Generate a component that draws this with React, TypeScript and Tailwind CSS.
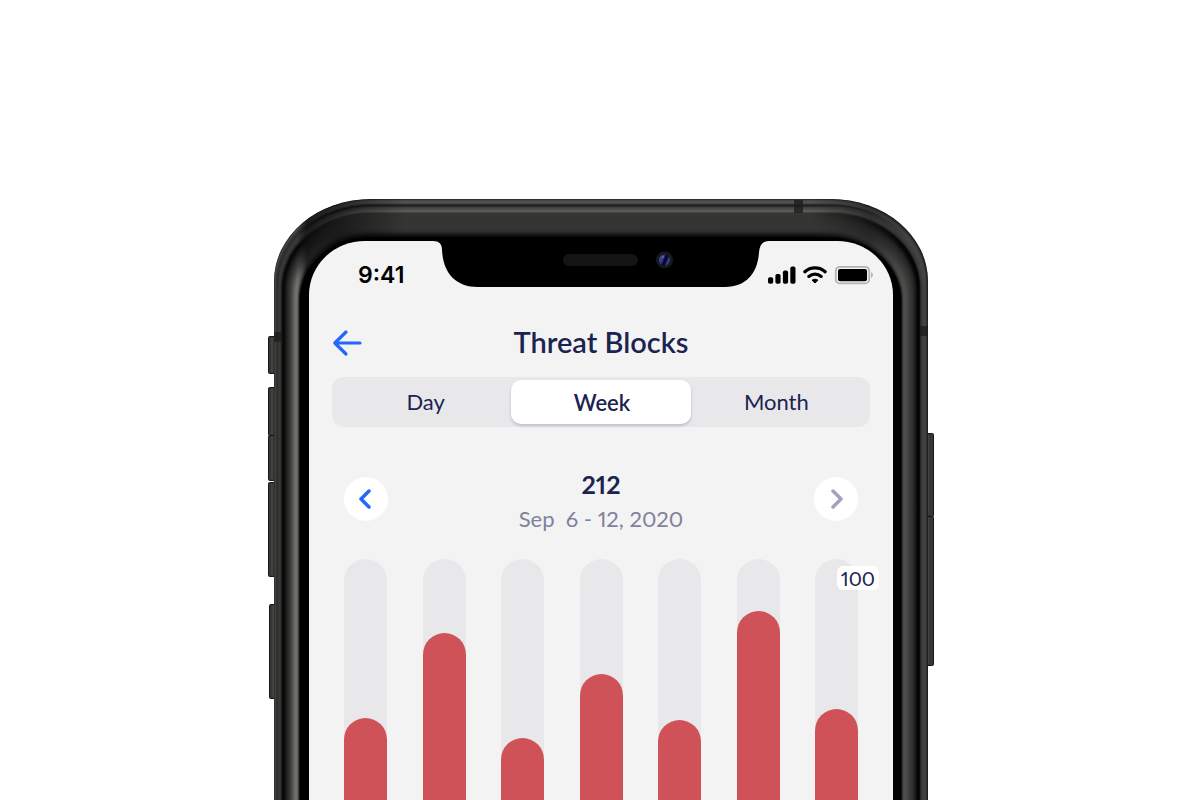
const NAVY = 'text-[#1b2350]';

type Layer = {
  left: number;
  top: number;
  right: number;
  l: number;
  t: number;
  r: number;
};

/* Insets from the outer edge, with the grey level at the left side, top and right side. */
const stops: Layer[] = [
  { left: 0, top: 0, right: 0, l: 36, t: 34, r: 30 },
  { left: 1, top: 1, right: 1, l: 72, t: 70, r: 40 },
  { left: 2, top: 3, right: 2, l: 52, t: 84, r: 62 },
  { left: 3, top: 5, right: 3, l: 44, t: 58, r: 68 },
  { left: 4, top: 6, right: 4, l: 48, t: 26, r: 66 },
  { left: 5, top: 8, right: 5, l: 58, t: 62, r: 64 },
  { left: 6, top: 10, right: 6, l: 54, t: 78, r: 58 },
  { left: 7, top: 12, right: 7, l: 42, t: 94, r: 52 },
  { left: 8, top: 14, right: 8, l: 14, t: 54, r: 14 },
  { left: 9, top: 15, right: 9, l: 6, t: 52, r: 2 },
  { left: 11, top: 17, right: 11, l: 18, t: 52, r: 10 },
  { left: 13, top: 20, right: 13, l: 38, t: 53, r: 34 },
  { left: 16, top: 24, right: 16, l: 60, t: 53, r: 50 },
  { left: 19, top: 29, right: 19, l: 92, t: 53, r: 64 },
  { left: 21, top: 32, right: 22, l: 114, t: 46, r: 80 },
  { left: 23, top: 35, right: 24, l: 108, t: 24, r: 82 },
  { left: 25, top: 38, right: 26, l: 34, t: 4, r: 36 },
  { left: 26, top: 39, right: 27, l: 0, t: 0, r: 0 },
];

const layers: Layer[] = stops.flatMap((a, i) => {
  const b = stops[i + 1];
  if (!b) return [a];
  return [0, 1, 2].map((k) => {
    const f = k / 3;
    const mix = (key: keyof Layer) => a[key] + (b[key] - a[key]) * f;
    return {
      left: mix('left'),
      top: mix('top'),
      right: mix('right'),
      l: mix('l'),
      t: mix('t'),
      r: mix('r'),
    };
  });
});

const grey = (v: number) => `rgb(${Math.round(v)} ${Math.round(v)} ${Math.round(v * 0.985)})`;

function shell({ left, top, right }: Layer) {
  const x0 = 274 + left;
  const x1 = 928 - right;
  const y = 199 + top;
  const rx = 97 - left;
  const ry = 82 - top * 0.5;
  return `M${x0} 810V${y + ry}A${rx} ${ry} 0 0 1 ${x0 + rx} ${y}H${x1 - rx}A${rx} ${ry} 0 0 1 ${x1} ${y + ry}V810Z`;
}

function SideButton({ x, y, h }: { x: number; y: number; h: number }) {
  return (
    <g>
      <rect x={x} y={y} width="10" height={h} rx="2" fill="#181818" />
      <rect x={x + 1} y={y + 1} width="8" height={h - 2} rx="1" fill="#353533" />
      <rect x={x + 3} y={y + 2} width="2" height={h - 4} fill="#42423f" />
    </g>
  );
}

function PhoneFrame() {
  return (
    <svg
      aria-hidden="true"
      viewBox="266 199 668 601"
      preserveAspectRatio="xMidYMin slice"
      className="absolute inset-0 h-full w-full"
    >
      <defs>
        {layers.map((d, i) => (
          <linearGradient key={i} id={`shell${i}`} gradientUnits="userSpaceOnUse" x1="274" x2="928" y1="0" y2="0">
            <stop offset="0.036" stopColor={grey(d.l)} />
            <stop offset="0.05" stopColor={grey((d.l + d.t) * 0.2)} />
            <stop offset="0.1" stopColor={grey(d.t * 0.5)} />
            <stop offset="0.2" stopColor={grey(d.t)} />
            <stop offset="0.82" stopColor={grey(d.t)} />
            <stop offset="0.91" stopColor={grey((d.r + d.t) * 0.35)} />
            <stop offset="0.97" stopColor={grey(d.r)} />
          </linearGradient>
        ))}
        <linearGradient id="lens" x1="0" x2="1" y1="0.3" y2="0.7">
          <stop offset="0" stopColor="#2b5f9e" />
          <stop offset="0.35" stopColor="#2c2f8a" />
          <stop offset="0.5" stopColor="#05051a" />
          <stop offset="0.65" stopColor="#0b0b30" />
          <stop offset="0.85" stopColor="#3a4aa0" />
          <stop offset="1" stopColor="#141a4a" />
        </linearGradient>
      </defs>

      <SideButton x={268} y={336} h={38} />
      <SideButton x={268} y={387} h={49} />
      <SideButton x={268} y={435} h={46} />
      <SideButton x={268} y={482} h={95} />
      <SideButton x={269} y={604} h={95} />
      <SideButton x={924} y={433} h={84} />
      <SideButton x={924} y={516} h={150} />

      {layers.map((d, i) => (
        <path key={i} d={shell(d)} fill={`url(#shell${i})`} />
      ))}

      <rect x="794" y="200" width="9" height="13" fill="#1d1d1c" opacity="0.8" />
      <rect x="274" y="332" width="8" height="10" fill="#1d1d1c" opacity="0.8" />
      <rect x="920" y="326" width="8" height="10" fill="#1d1d1c" opacity="0.8" />

      <path d="M309 810V295A56 54 0 0 1 365 241H837A56 54 0 0 1 893 295V810Z" fill="#f3f3f3" />
      <path
        d="M433 240V241C439 241 442 244 442 250C443 272 455 287 478 287H725C747 287 758 272 759 252C760 244 763 241 769 241V240Z"
        fill="#000"
      />
      <rect x="563" y="254" width="75" height="12" rx="6" fill="#141414" />
      <circle cx="664.5" cy="260" r="8.5" fill="#19191b" />
      <circle cx="664.5" cy="260" r="5.5" fill="url(#lens)" />
      <circle cx="663" cy="257" r="1.2" fill="#7a4fb0" />
    </svg>
  );
}

function StatusIcons() {
  return (
    <svg role="img" aria-label="Signal, Wi-Fi and battery" width="106" height="20" viewBox="768 265 106 20">
      <rect x="768" y="277.2" width="5.2" height="6.6" rx="1.8" />
      <rect x="775.4" y="274" width="5.2" height="9.8" rx="1.8" />
      <rect x="782.9" y="270.4" width="5.2" height="13.4" rx="1.8" />
      <rect x="790.3" y="266.6" width="5.2" height="17.2" rx="1.8" />
      <g fill="none" stroke="#000" strokeWidth="3.2" strokeLinecap="round">
        <path d="M804.8 271.8C810.6 266.6 819.4 266.6 825.2 271.8" />
        <path d="M808.8 276.400C812.4 273.400 817.6 273.400 821.2 276.400" />
      </g>
      <path
        d="M815 283L812 280.2C813.8 278.900 816.2 278.900 818 280.2Z"
        stroke="#000"
        strokeWidth="1"
        strokeLinejoin="round"
      />
      <rect x="835.8" y="266.8" width="33.4" height="16.6" rx="4" fill="none" stroke="#b2b2b2" strokeWidth="1.8" />
      <rect x="838" y="269" width="29" height="12.2" rx="2" />
      <path d="M871 272.300C873.600 273 873.600 277 871 277.700Z" fill="#b2b2b2" />
    </svg>
  );
}

function Chevron({ flip = false }: { flip?: boolean }) {
  return (
    <svg aria-hidden="true" width="14" height="22" viewBox="0 0 14 22" fill="none" stroke="currentColor" strokeWidth="3.5" strokeLinecap="round" strokeLinejoin="round">
      <path d={flip ? 'M4 3L12 11L4 19' : 'M10 3L2 11L10 19'} />
    </svg>
  );
}

const days = [
  { name: 'Sunday', fill: 34 },
  { name: 'Monday', fill: 69.3 },
  { name: 'Tuesday', fill: 25.7 },
  { name: 'Wednesday', fill: 52.3 },
  { name: 'Thursday', fill: 33.2 },
  { name: 'Friday', fill: 78.4 },
  { name: 'Saturday', fill: 37.8 },
];

export default function App() {
  return (
    <main
      className={`flex h-screen min-h-[640px] flex-col items-center overflow-hidden bg-white pt-[199px] font-['Lato','Liberation_Sans',sans-serif] ${NAVY}`}
    >
      <div className="relative flex w-full max-w-[668px] flex-1 flex-col pt-[42px] pr-[41px] pl-[43px]">
        <PhoneFrame />

        <div className="relative flex flex-1 flex-col px-[23px]">
          <div className="-mr-1 flex h-[68px] items-center justify-between pl-[26px] text-black">
            <span className="font-['Inter','Liberation_Sans',sans-serif] text-[23px] font-semibold">9:41</span>
            <StatusIcons />
          </div>

          <header className="grid h-[68px] grid-cols-[1fr_auto_1fr] items-center">
            <button type="button" aria-label="Back" className="justify-self-start text-[#2367fb]">
              <svg aria-hidden="true" width="31" height="28" viewBox="0 0 31 28" fill="none" stroke="currentColor" strokeWidth="3.2" strokeLinecap="round" strokeLinejoin="round">
                <path d="M14 3L2.800 14L14 25M2.800 14H28" />
              </svg>
            </button>
            <h1 className="pb-0.5 text-[29px] font-semibold">Threat Blocks</h1>
          </header>

          <div role="group" aria-label="Period" className="grid h-[50px] grid-cols-3 rounded-xl bg-[#e8e8ea] py-[3px] text-[22px]">
            <button type="button" aria-pressed="false" className="pb-0.5 pl-2">
              Day
            </button>
            <button type="button" aria-pressed="true" className="rounded-[10px] bg-white pl-0.5 font-semibold shadow-[0_2px_3px_rgba(27,35,80,0.2)]">
              Week
            </button>
            <button type="button" aria-pressed="false" className="pr-2 pb-0.5">
              Month
            </button>
          </div>

          <section className="mt-10 flex flex-1 flex-col px-3">
            <div className="flex items-start justify-between">
              <button type="button" aria-label="Previous week" className="mt-2.5 flex size-11 items-center justify-center rounded-full bg-white text-[#2367fb]">
                <Chevron />
              </button>
              <div className="text-center proportional-nums">
                <p className="text-[25px] leading-[34px] font-bold">212</p>
                <p className="text-[22px] leading-9 whitespace-pre text-[#7f829b]">Sep  6 - 12, 2020</p>
              </div>
              <button type="button" aria-label="Next week" className="mt-2.5 flex size-11 items-center justify-center rounded-full bg-white text-[#a1a4b8]">
                <Chevron flip />
              </button>
            </div>

            <div className="relative mt-[22px] flex flex-1 justify-between">
              {days.map((day) => (
                <div key={day.name} role="img" aria-label={day.name} className="flex w-[43px] flex-col justify-end rounded-t-full bg-[#e8e8ea]">
                  <div className="rounded-t-full bg-[#d05259]" style={{ height: `${day.fill}%` }} />
                </div>
              ))}
              <span className="absolute top-[7px] -right-[21px] rounded-md bg-white px-1 text-[20px] leading-6 proportional-nums">100</span>
            </div>
          </section>
        </div>
      </div>
    </main>
  );
}
